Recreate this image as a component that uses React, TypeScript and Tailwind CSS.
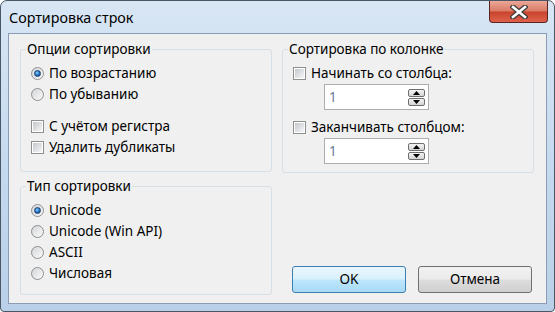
import React from 'react';

const font = { fontFamily: '"Noto Sans", "Open Sans", sans-serif' };

const Radio: React.FC<{ checked?: boolean; label: string }> = ({ checked, label }) => (
  <label className="flex h-[21px] items-center gap-[5px]">
    <span className="flex h-[13px] w-[13px] items-center justify-center rounded-full border border-[#8e8f8f] bg-gradient-to-br from-[#d3d5d8] to-[#fbfbfb]">
      {checked && (
        <span className="h-[7px] w-[7px] rounded-full border border-[#1b3d6e] bg-[radial-gradient(circle_at_40%_35%,#8fd0ff_0%,#2a7fd0_45%,#0b3a7a_100%)]" />
      )}
    </span>
    <span>{label}</span>
  </label>
);

const Check: React.FC<{ label: string }> = ({ label }) => (
  <label className="flex h-[21px] items-center gap-[5px]">
    <span className="flex h-[13px] w-[13px] items-center justify-center border border-[#8e8f8f] bg-white">
      <span className="h-[9px] w-[9px] bg-gradient-to-br from-[#c4c8cd] to-[#f6f6f6]" />
    </span>
    <span>{label}</span>
  </label>
);

const Arrow: React.FC<{ up?: boolean }> = ({ up }) => (
  <span className="flex h-[8px] w-[17px] items-center justify-center rounded-[2px] border border-[#6f6f6f] bg-gradient-to-b from-[#f5f5f5] to-[#d4d4d4]">
    <svg width="7" height="4" viewBox="0 0 7 4">
      {up ? <polygon points="0,4 7,4 3.5,0" fill="#000" /> : <polygon points="0,0 7,0 3.5,4" fill="#000" />}
    </svg>
  </span>
);

const Spin: React.FC = () => (
  <div className="ml-[31px] flex h-[26px] w-[105px] items-center justify-between border border-[#abadb3] bg-white pl-[4px] pr-[3px]">
    <span className="text-[#6b7a99]">1</span>
    <div className="flex flex-col gap-[1px]">
      <Arrow up />
      <Arrow />
    </div>
  </div>
);

const Group: React.FC<{ title: string; className?: string; children: React.ReactNode }> = ({ title, className, children }) => (
  <fieldset className={`rounded-[3px] border border-[#d5dfe5] px-[10px] ${className ?? ''}`}>
    <legend className="ml-[-5px] px-[1px] leading-[16px]">{title}</legend>
    {children}
  </fieldset>
);

export default function App() {
  return (
    <div
      className="flex h-[312px] w-[555px] flex-col rounded-t-[7px] rounded-b-[4px] border border-[#4a5766] bg-gradient-to-b from-[#d8e6f4] via-[#c6daef] to-[#b9d0e8] text-[13.5px] text-black"
      style={font}
    >
      <div className="flex h-[32px] items-start justify-between">
        <span className="ml-[8px] mt-[6px] text-[14.3px]">Сортировка строк</span>
        <button className="mr-[6px] flex h-[22px] w-[59px] items-center justify-center rounded-b-[4px] border border-t-0 border-[#5a2420] bg-[linear-gradient(to_bottom,#eba898_0%,#d97a66_48%,#c8432c_52%,#df624c_100%)]">
          <svg width="18" height="14" viewBox="0 0 18 14">
            <path d="M3 2 L15 12 M15 2 L3 12" stroke="#3a3a3a" strokeWidth="5" strokeLinecap="square" />
            <path d="M3 2 L15 12 M15 2 L3 12" stroke="#ffffff" strokeWidth="2.6" strokeLinecap="square" />
          </svg>
        </button>
      </div>
      <div className="mx-[7px] mb-[7px] flex flex-1 gap-[10px] border border-[#8a9db4] bg-[#f0f0f0] pb-[8px] pl-[11px] pr-[12px] pt-[7px]">
        <div className="flex w-[252px] flex-col gap-[6px]">
          <Group title="Опции сортировки" className="h-[131px]">
            <div className="mt-[6px] flex flex-col">
              <Radio checked label="По возрастанию" />
              <Radio label="По убыванию" />
              <div className="mt-[11px]">
                <Check label="С учётом регистра" />
              </div>
              <Check label="Удалить дубликаты" />
            </div>
          </Group>
          <Group title="Тип сортировки" className="flex-1">
            <div className="mt-[6px] flex flex-col">
              <Radio checked label="Unicode" />
              <Radio label="Unicode (Win API)" />
              <Radio label="ASCII" />
              <Radio label="Числовая" />
            </div>
          </Group>
        </div>
        <div className="flex w-[252px] flex-col justify-between">
          <Group title="Сортировка по колонке" className="h-[132px]">
            <div className="mt-[6px] flex flex-col">
              <Check label="Начинать со столбца:" />
              <Spin />
              <div className="mt-[7px]">
                <Check label="Заканчивать столбцом:" />
              </div>
              <Spin />
            </div>
          </Group>
          <div className="mb-[2px] flex justify-end gap-[12px] pr-[2px]">
            <button className="h-[27px] w-[114px] rounded-[3px] border border-[#3c7fb1] bg-[linear-gradient(to_bottom,#eaf6fd_0%,#d9f0fc_48%,#bee6fd_52%,#a7d9f5_100%)]">
              OK
            </button>
            <button className="h-[27px] w-[114px] rounded-[3px] border border-[#707070] bg-[linear-gradient(to_bottom,#f2f2f2_0%,#ebebeb_48%,#dddddd_52%,#cfcfcf_100%)]">
              Отмена
            </button>
          </div>
        </div>
      </div>
    </div>
  );
}
